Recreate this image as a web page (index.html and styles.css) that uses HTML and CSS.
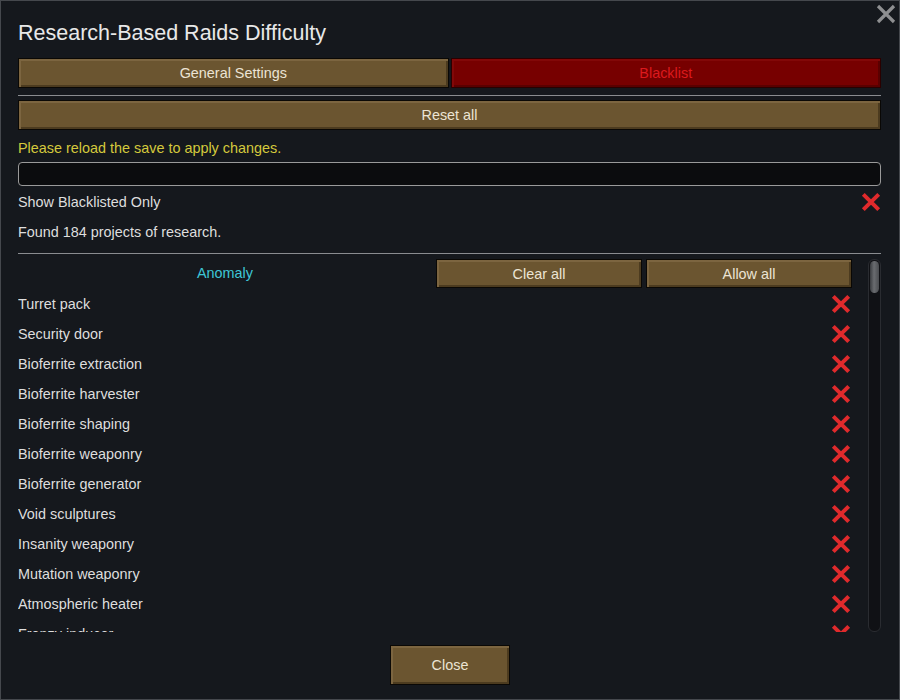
FILE: index.html
```html
<!DOCTYPE html>
<html>
<head>
<meta charset="utf-8">
<link rel="stylesheet" href="styles.css">
</head>
<body>
<div class="window">
  <button class="win-close" aria-label="Close">
    <svg width="20" height="20" viewBox="0 0 20 20"><path d="M2 2 L18 18 M18 2 L2 18" stroke="#8e8f91" stroke-width="3.2" fill="none"/></svg>
  </button>
  <div class="title">Research-Based Raids Difficulty</div>
  <div class="tabs">
    <div class="btn tab">General Settings</div>
    <div class="btn tab active">Blacklist</div>
  </div>
  <div class="sep sep-top"></div>
  <div class="btn reset">Reset all</div>
  <div class="notice">Please reload the save to apply changes.</div>
  <div class="search"></div>
  <div class="toggle-row">
    <span>Show Blacklisted Only</span>
    <svg class="xmark" width="22" height="22" viewBox="0 0 20 20"><path d="M3 3 L17 17 M17 3 L3 17" stroke="#e02a2c" stroke-width="3.6" fill="none"/></svg>
  </div>
  <div class="found">Found 184 projects of research.</div>
  <div class="sep sep-mid"></div>
  <div class="main">
    <div class="list">
      <div class="list-head">
        <div class="category">Anomaly</div>
        <div class="btn small">Clear all</div>
        <div class="btn small">Allow all</div>
      </div>
      <div class="row"><span>Turret pack</span><svg class="xmark" width="22" height="22" viewBox="0 0 20 20"><path d="M3 3 L17 17 M17 3 L3 17" stroke="#e02a2c" stroke-width="3.6" fill="none"/></svg></div>
      <div class="row"><span>Security door</span><svg class="xmark" width="22" height="22" viewBox="0 0 20 20"><path d="M3 3 L17 17 M17 3 L3 17" stroke="#e02a2c" stroke-width="3.6" fill="none"/></svg></div>
      <div class="row"><span>Bioferrite extraction</span><svg class="xmark" width="22" height="22" viewBox="0 0 20 20"><path d="M3 3 L17 17 M17 3 L3 17" stroke="#e02a2c" stroke-width="3.6" fill="none"/></svg></div>
      <div class="row"><span>Bioferrite harvester</span><svg class="xmark" width="22" height="22" viewBox="0 0 20 20"><path d="M3 3 L17 17 M17 3 L3 17" stroke="#e02a2c" stroke-width="3.6" fill="none"/></svg></div>
      <div class="row"><span>Bioferrite shaping</span><svg class="xmark" width="22" height="22" viewBox="0 0 20 20"><path d="M3 3 L17 17 M17 3 L3 17" stroke="#e02a2c" stroke-width="3.6" fill="none"/></svg></div>
      <div class="row"><span>Bioferrite weaponry</span><svg class="xmark" width="22" height="22" viewBox="0 0 20 20"><path d="M3 3 L17 17 M17 3 L3 17" stroke="#e02a2c" stroke-width="3.6" fill="none"/></svg></div>
      <div class="row"><span>Bioferrite generator</span><svg class="xmark" width="22" height="22" viewBox="0 0 20 20"><path d="M3 3 L17 17 M17 3 L3 17" stroke="#e02a2c" stroke-width="3.6" fill="none"/></svg></div>
      <div class="row"><span>Void sculptures</span><svg class="xmark" width="22" height="22" viewBox="0 0 20 20"><path d="M3 3 L17 17 M17 3 L3 17" stroke="#e02a2c" stroke-width="3.6" fill="none"/></svg></div>
      <div class="row"><span>Insanity weaponry</span><svg class="xmark" width="22" height="22" viewBox="0 0 20 20"><path d="M3 3 L17 17 M17 3 L3 17" stroke="#e02a2c" stroke-width="3.6" fill="none"/></svg></div>
      <div class="row"><span>Mutation weaponry</span><svg class="xmark" width="22" height="22" viewBox="0 0 20 20"><path d="M3 3 L17 17 M17 3 L3 17" stroke="#e02a2c" stroke-width="3.6" fill="none"/></svg></div>
      <div class="row"><span>Atmospheric heater</span><svg class="xmark" width="22" height="22" viewBox="0 0 20 20"><path d="M3 3 L17 17 M17 3 L3 17" stroke="#e02a2c" stroke-width="3.6" fill="none"/></svg></div>
      <div class="row"><span>Frenzy inducer</span><svg class="xmark" width="22" height="22" viewBox="0 0 20 20"><path d="M3 3 L17 17 M17 3 L3 17" stroke="#e02a2c" stroke-width="3.6" fill="none"/></svg></div>
    </div>
    <div class="scrollbar"><div class="thumb"></div></div>
  </div>
  <div class="footer">
    <div class="btn close">Close</div>
  </div>
</div>
</body>
</html>
```

FILE: styles.css
```css
html, body {
  margin: 0;
  padding: 0;
  background: #15181d;
}

.window {
  position: relative;
  box-sizing: border-box;
  width: 900px;
  height: 700px;
  border: 1px solid #45484d;
  background: #15181d;
  padding: 0 18px 0 17px;
  display: flex;
  flex-direction: column;
  font-family: "Liberation Sans", Arial, sans-serif;
  font-size: 14.4px;
  color: #dedede;
}

.win-close {
  position: absolute;
  top: 3px;
  right: 3px;
  width: 20px;
  height: 20px;
  padding: 0;
  border: 0;
  background: none;
  display: flex;
}

.title {
  margin-top: 19px;
  height: 26px;
  line-height: 26px;
  font-size: 21.5px;
  color: #e8e8e8;
}

.btn {
  box-sizing: border-box;
  display: flex;
  align-items: center;
  justify-content: center;
  background: #6b5530;
  border: 1px solid #0a0805;
  box-shadow: inset 2px 2px 0 #7c6540, inset -2px -2px 0 #4c3b1f;
  color: #ece4d4;
  font-size: 14.4px;
}

.tabs {
  margin-top: 12px;
  display: flex;
  gap: 2px;
  height: 30px;
}

.tab {
  flex: 1;
}

.tab.active {
  background: #770000;
  border-color: #2a0000;
  box-shadow: inset 2px 2px 0 #820808, inset -2px -2px 0 #5a0000;
  color: #dc1a1e;
}

.sep {
  height: 1px;
  background: #8a8c90;
}

.sep-top {
  margin-top: 7px;
}

.reset {
  margin-top: 4px;
  height: 30px;
}

.notice {
  margin-top: 7px;
  height: 22px;
  line-height: 22px;
  color: #d4c93c;
}

.search {
  box-sizing: border-box;
  margin-top: 3px;
  height: 24px;
  border: 1px solid #9a9a9a;
  border-radius: 4px;
  background: #0b0c0e;
}

.toggle-row {
  height: 32px;
  display: flex;
  align-items: center;
  justify-content: space-between;
}

.toggle-row .xmark {
  margin-right: -1px;
}

.found {
  height: 28px;
  line-height: 28px;
}

.sep-mid {
  margin-top: 7px;
}

.main {
  margin-top: 5px;
  height: 373px;
  display: flex;
  justify-content: space-between;
}

.list {
  width: 834px;
  overflow: hidden;
}

.list-head {
  height: 28px;
  display: flex;
  gap: 4px;
  margin-bottom: 2px;
}

.category {
  width: 414px;
  display: flex;
  align-items: center;
  justify-content: center;
  color: #3ec6d6;
}

.small {
  width: 206px;
  height: 29px;
}

.row {
  height: 30px;
  display: flex;
  align-items: center;
  justify-content: space-between;
}

.scrollbar {
  box-sizing: border-box;
  width: 13px;
  height: 373px;
  border: 1px solid #2a2c31;
  border-radius: 6px;
  background: #101115;
  padding: 1px;
}

.thumb {
  height: 32px;
  border-radius: 5px;
  background: linear-gradient(90deg, #3a3c40 0%, #6a6c70 45%, #4a4c50 100%);
}

.footer {
  margin-top: 13px;
  display: flex;
  justify-content: center;
}

.close {
  width: 120px;
  height: 40px;
  margin-left: 1px;
}
```
